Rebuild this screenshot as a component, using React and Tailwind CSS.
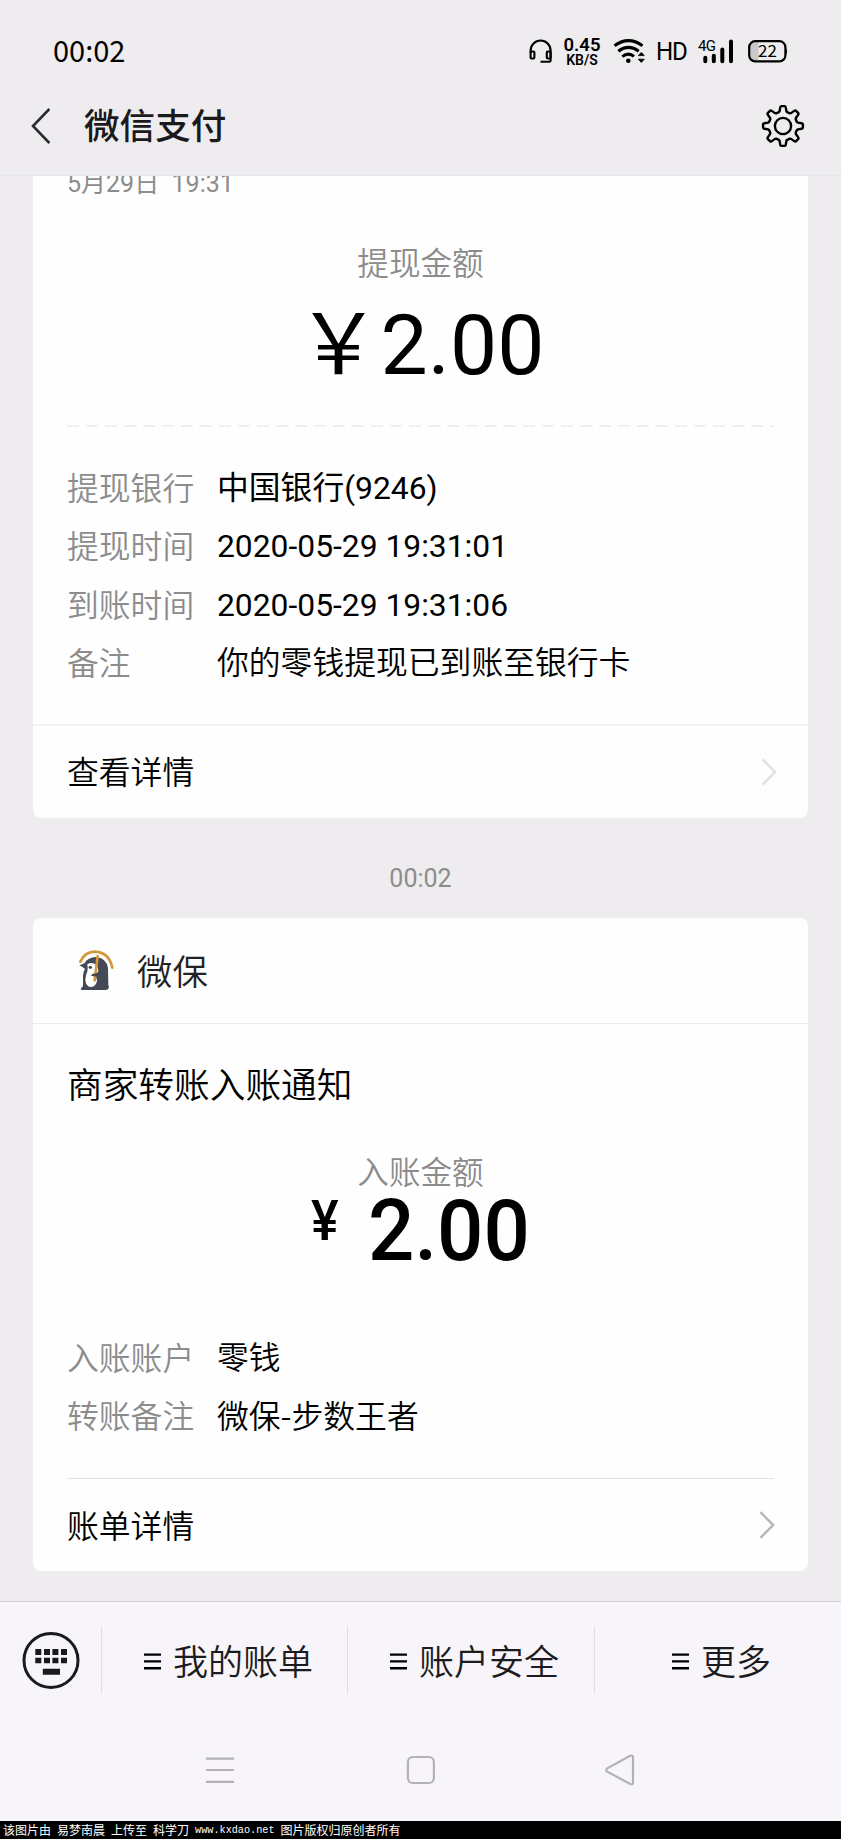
import React from 'react';

const GRAY = 'text-[#8c8c8c]';

function gearPath() {
  const pt = (r, deg) => {
    const a = (deg * Math.PI) / 180;
    return `${(r * Math.cos(a)).toFixed(2)} ${(r * Math.sin(a)).toFixed(2)}`;
  };
  let d = '';
  for (let i = 0; i < 8; i++) {
    const a = i * 45 - 90;
    d += `${i === 0 ? 'M' : 'L'}${pt(14.4, a - 17)} L${pt(15.2, a - 13)} L${pt(18.8, a - 8.5)} Q${pt(20, a - 7.5)} ${pt(20, a - 5)} L${pt(20, a + 5)} Q${pt(20, a + 7.5)} ${pt(18.8, a + 8.5)} L${pt(15.2, a + 13)} L${pt(14.4, a + 17)} `;
  }
  return d + 'Z';
}

function StatusBar() {
  return (
    <div className="flex h-[76px] items-start pl-[53px] pt-[32px] text-black">
      <span className="-mt-[2px] w-[475px] font-['Noto_Sans_CJK_SC',sans-serif] text-[29px] leading-[38px]">00:02</span>
      <svg className="mt-[6px] h-[26px] w-[26px] shrink-0" viewBox="528 38 26 26" fill="none" stroke="#000" strokeWidth="2.1">
        <path d="M530.6 53 V50.5 A10 10 0 0 1 550.6 50.5 V60.5 Q550.6 61.8 549.3 61.8 H540.5" />
        <rect x="530.6" y="51.5" width="3.8" height="7" rx="1" />
        <rect x="546.8" y="51.5" width="3.8" height="7" rx="1" />
      </svg>
      <div className="ml-[6px] flex w-[44px] flex-col items-center pt-[4px] font-[Roboto,sans-serif] font-semibold">
        <span className="text-[18.5px] leading-[18px]">0.45</span>
        <span className="text-[14px] leading-[13px]">KB/S</span>
      </div>
      <svg className="ml-[9px] mt-[6px] h-[26px] w-[34px] shrink-0" viewBox="614 38 34 26" fill="none" stroke="#000" strokeWidth="3">
        <path d="M615.5 45.8 Q629.5 35.5 643.5 45.8" />
        <path d="M619.3 51.2 Q629.5 43.6 639.7 51.2" />
        <path d="M623.3 56.6 Q629.3 51.8 635 56.4" />
        <circle cx="629.3" cy="60.8" r="2.3" fill="#000" stroke="none" />
        <path d="M639.3 55.6 L642.3 52.4 L645.3 55.6 Z M639.3 59.2 L642.3 62.4 L645.3 59.2 Z" fill="#000" strokeWidth="0.8" />
      </svg>
      <span className="ml-[9px] w-[33px] origin-left scale-x-[0.91] font-[Roboto,sans-serif] text-[26.5px] leading-[38px] tracking-[-1.2px]">HD</span>
      <div className="ml-[9px] flex w-[38px] items-start">
        <span className="w-[0px] whitespace-nowrap pt-[6px] font-[Roboto,sans-serif] text-[15px] leading-[16px] tracking-[-0.8px]">4G</span>
        <svg className="mt-[6px] h-[26px] w-[38px] shrink-0" viewBox="699 38 38 26">
          <path d="M706.3 57.8v3.4M714.8 55.8v5.4M723.3 49.6v11.6M732 41.6v19.6" stroke="#000" strokeWidth="4" strokeLinecap="round" />
        </svg>
      </div>
      <div className="relative ml-[11px] mt-[7px] h-[24px] w-[41px]">
        <svg className="h-[24px] w-[41px]" viewBox="747 39 41 24">
          <path d="M755 41.5 h3.5 v19.5 h-3.5 a5 5 0 0 1 -5-5 v-9.5 a5 5 0 0 1 5-5z" fill="#c9c7ca" />
          <rect x="749.2" y="41.2" width="36.2" height="20.2" rx="6" fill="none" stroke="#000" strokeWidth="2.2" />
          <path d="M785.5 48 q2.2 3.4 0 6.8z" fill="#000" stroke="#000" />
        </svg>
        <span className="absolute inset-x-0 top-0 text-center font-['Noto_Sans_CJK_SC',sans-serif] text-[17px] leading-[22px]">22</span>
      </div>
    </div>
  );
}

function Header() {
  return (
    <header className="h-[176px] border-b border-[#e6e5e7]">
      <StatusBar />
      <div className="flex h-[99px] items-center pl-[30px] pr-[36px]">
        <svg className="h-[36px] w-[20px]" viewBox="0 0 20 36" fill="none" stroke="#2b2a2c" strokeWidth="2.6">
          <path d="M19.4 1 L3 18 L19.4 35" />
        </svg>
        <h1 className="-mt-[4px] ml-[34px] flex-1 font-['Noto_Sans_CJK_SC',sans-serif] text-[35.6px] font-medium leading-[50px] text-[#1a191b]">微信支付</h1>
        <svg className="h-[44px] w-[44px]" viewBox="-22 -22 44 44" fill="none" stroke="#000" strokeWidth="2.4" strokeLinejoin="round">
          <path d={gearPath()} />
          <circle r="8.1" />
        </svg>
      </div>
    </header>
  );
}

function Row({ label, value, cjk }) {
  return (
    <div className="flex h-[58.4px] items-center text-[31.8px] leading-[56px]">
      <span className={`w-[150px] pt-[2px] font-[350] ${GRAY}`}>{label}</span>
      {cjk ? (
        <span className="-mt-[5px] font-['Noto_Sans_CJK_SC',sans-serif] font-[350] text-black">{value}</span>
      ) : (
        <span className="text-black">{value}</span>
      )}
    </div>
  );
}

function Chevron({ className }) {
  return (
    <svg className={`h-[28px] w-[16px] ${className}`} viewBox="0 0 16 28" fill="none" stroke="currentColor" strokeWidth="2.5">
      <path d="M1.5 1.2 L14.2 14 L1.5 26.8" />
    </svg>
  );
}

function Penguin() {
  return (
    <svg className="h-[42px] w-[36px]" viewBox="60 43 108 126" fill="none">
      <path d="M61 89 Q70 86 77 82 Q86 66 112 64 Q144 68 147 98 L148 148 Q152 154 148 159 Q145 163 138 163 H68 Q64 162 66 158 Q73 154 72 148 L72 112 Q76 105 78 100 Q74 95 61 89Z" fill="#454955" />
      <path d="M85 85 Q104 76 116 94 Q121 112 112 113 Q98 112 99 118 Q114 122 114 136 Q111 153 96 154 Q80 152 79 132 Q80 116 85 108 Q87 98 85 85Z" fill="#fff" />
      <path d="M70 108 L74 108 Q70 122 72 140 Q65 124 70 108Z" fill="#fff" />
      <circle cx="94" cy="95" r="5" fill="#454955" />
      <path d="M116 61 L107 134" stroke="#d2973c" strokeWidth="8" strokeLinecap="round" />
      <path d="M94 119 Q108 126 124 118 L126 108 Q105 115 94 119Z" fill="#454955" />
      <path d="M64 78 Q78 48 108 48 Q150 50 160 96" stroke="#d2973c" strokeWidth="8" strokeLinecap="round" />
    </svg>
  );
}

function WithdrawCard() {
  return (
    <section className="mx-[33px] h-[642px] overflow-hidden rounded-b-[8px] bg-[#fefefe]">
      <div className="px-[34px]">
        <div className={`-mt-[10px] h-[36px] whitespace-pre text-[25px] leading-[36px] ${GRAY}`}>5月29日  19:31</div>
        <div className={`mt-[38px] h-[50px] text-center text-[31.6px] font-[350] leading-[50px] ${GRAY}`}>提现金额</div>
        <div className="mt-[6px] h-[100px] text-center text-[84px] leading-[100px] text-black">￥2.00</div>
        <div className="mt-[29px] h-[2px] bg-[repeating-linear-gradient(90deg,#f0f0f0_0_12px,transparent_12px_19px)]" />
        <div className="mt-[31.6px]">
          <Row label="提现银行" value="中国银行(9246)" />
          <Row label="提现时间" value="2020-05-29 19:31:01" />
          <Row label="到账时间" value="2020-05-29 19:31:06" />
          <Row label="备注" value="你的零钱提现已到账至银行卡" cjk />
        </div>
      </div>
      <div className="mt-[31.8px] flex h-[94px] items-center justify-between border-t-2 border-[#f3f3f4] pl-[34px] pr-[31px] text-[31.8px] font-[350] leading-[88px] text-black">
        <span className="pt-[3px]">查看详情</span>
        <Chevron className="text-[#e2e2e3]" />
      </div>
    </section>
  );
}

function TransferCard() {
  return (
    <section className="mx-[33px] h-[653px] overflow-hidden rounded-[8px] bg-[#fefefe]">
      <div className="flex h-[106px] items-center border-b border-[#ececed] pl-[46px]">
        <Penguin />
        <span className="ml-[22px] pt-[4px] text-[35.4px] font-[350] leading-[100px] text-[#222]">微保</span>
      </div>
      <div className="px-[34px]">
        <h2 className="mt-[36px] h-[52px] text-[35.7px] font-[350] leading-[52px] text-black">商家转账入账通知</h2>
        <div className={`mt-[37px] h-[50px] text-center text-[31.6px] font-[350] leading-[50px] ${GRAY}`}>入账金额</div>
        <div className="flex h-[74px] items-start pl-[244px] font-medium text-black">
          <span className="origin-left scale-x-[0.93] text-[56px] leading-[44px]">¥</span>
          <span className="ml-[27px] origin-left scale-x-[0.96] text-[85px] leading-[64px]">2.00</span>
        </div>
        <div className="mt-[55.6px]">
          <Row label="入账账户" value="零钱" cjk />
          <Row label="转账备注" value="微保-步数王者" cjk />
        </div>
        <div className="mt-[32.4px] flex h-[94px] items-center justify-between border-t border-[#e3e3e4] text-[31.8px] font-[350] leading-[88px] text-black">
          <span className="pt-[4px]">账单详情</span>
          <Chevron className="-mr-[1px] text-[#b8b8b9]" />
        </div>
      </div>
    </section>
  );
}

function MenuItem({ children, className }) {
  return (
    <div className={`flex h-[68px] items-center ${className}`}>
      <svg className="mt-[2px] h-[17px] w-[17px]" viewBox="0 0 17 17" stroke="#000" strokeWidth="2.4">
        <path d="M0 1.6H17M0 8.4H17M0 15.2H17" />
      </svg>
      <span className="ml-[12px] pt-[7px] text-[35px] font-[350] leading-[61px] text-[#1c1b1d]">{children}</span>
    </div>
  );
}

function Footer() {
  return (
    <footer className="h-[220px] border-t border-[#cfcdd1] bg-[#f7f5f9]">
      <div className="mt-[24px] flex h-[68px] items-center">
        <div className="flex h-[68px] w-[102px] items-center border-r border-[#dfdde1] pl-[22px]">
          <svg className="h-[58px] w-[58px]" viewBox="0 0 58 58" fill="#1a191b">
            <circle cx="29" cy="29.4" r="27" fill="none" stroke="#1a191b" strokeWidth="3" />
            <path d="M13.3 18h6v6h-6zM22 18h6v6h-6zM30.4 18h6v6h-6zM39 18h6v6h-6zM13.3 26.7h6v5.6h-6zM22 26.7h6v5.6h-6zM30.4 26.7h6v5.6h-6zM39 26.7h6v5.6h-6zM20.8 37.8h17.2v6h-17.2z" />
          </svg>
        </div>
        <MenuItem className="w-[246px] border-r border-[#dfdde1] pl-[42px]">我的账单</MenuItem>
        <MenuItem className="w-[247px] border-r border-[#dfdde1] pl-[42px]">账户安全</MenuItem>
        <MenuItem className="w-[246px] pl-[77px]">更多</MenuItem>
      </div>
      <div className="mt-[59px] flex h-[34px] items-center pl-[205px] text-[#b3b1b5]">
        <svg className="h-[32px] w-[30px]" viewBox="0 0 30 32" stroke="currentColor" strokeWidth="2.2">
          <path d="M1 4.6H29M1 16H29M1 27.8H29" />
        </svg>
        <svg className="ml-[171px] h-[32px] w-[30px]" viewBox="0 0 30 32" fill="none" stroke="currentColor" strokeWidth="2.2">
          <rect x="1.9" y="3" width="26" height="26" rx="5" />
        </svg>
        <svg className="ml-[168px] h-[32px] w-[32px]" viewBox="0 0 32 32" fill="none" stroke="currentColor" strokeWidth="2.2" strokeLinejoin="round">
          <path d="M3.2 14.4 Q1.2 16 3.2 17.6 L26.2 30 Q29 31 29 28.2 V3.6 Q29 0.8 26.2 1.8 Z" />
        </svg>
      </div>
    </footer>
  );
}

function Caption() {
  return (
    <div className="flex h-[18px] items-center gap-[6px] whitespace-nowrap bg-black pl-[3px] font-['Noto_Sans_CJK_SC',sans-serif] text-[12px] leading-[18px] text-white">
      <span>该图片由</span>
      <span>易梦南晨</span>
      <span>上传至</span>
      <span>科学刀</span>
      <span className="pt-[2px] font-['Liberation_Mono',monospace] text-[10.2px] leading-[16px]">www.kxdao.net</span>
      <span>图片版权归原创者所有</span>
    </div>
  );
}

export default function App() {
  return (
    <div className="flex h-[1839px] w-[841px] flex-col overflow-hidden bg-[#eeecef] font-[Roboto,'Noto_Sans_CJK_SC',sans-serif]">
      <Header />
      <main className="h-[1425px]">
        <WithdrawCard />
        <div className={`flex h-[100px] items-center justify-center pt-[21px] text-[25px] leading-[30px] ${GRAY}`}>00:02</div>
        <TransferCard />
      </main>
      <Footer />
      <Caption />
    </div>
  );
}
